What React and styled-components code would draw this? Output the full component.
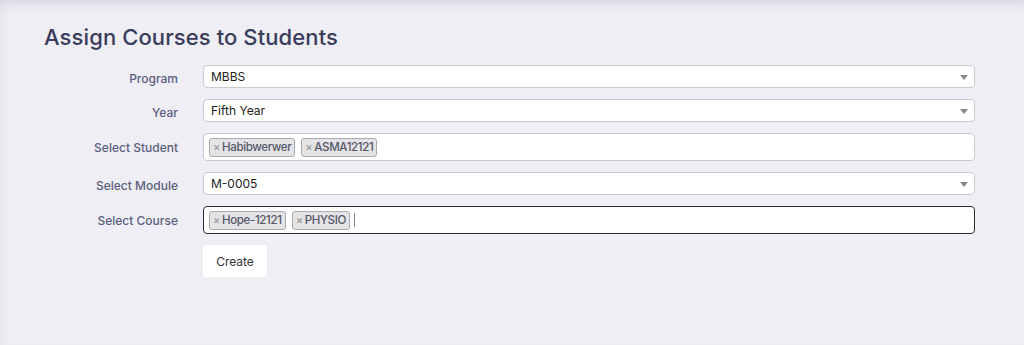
import React from 'react'
import styled, {createGlobalStyle} from 'styled-components'

const GlobalStyle = createGlobalStyle`
    html, body {
        margin: 0;
        padding: 0;
        background: #eeeef4;
        font-family: Inter, "Noto Sans", Arial, sans-serif;
    }
`

const Page = styled.div`
    height: 345px;
    box-sizing: border-box;
    background: #eeeef4;
    box-shadow: inset 0 12px 10px -8px rgba(200, 200, 215, 0.6), inset 10px 0 10px -8px rgba(225, 225, 235, 0.8);
    padding: 23px 49px 0 44px;

    h1 {
        margin: 0 0 14px;
        font-size: 22px;
        font-weight: 500;
        color: #393c5b;
        letter-spacing: 0.1px;
        line-height: 28px;
    }
`

const Form = styled.div`
    display: grid;
    grid-template-columns: 134px 1fr;
    column-gap: 25px;
    row-gap: 11px;
    align-items: center;
`

const Label = styled.label`
    text-align: right;
    font-size: 12px;
    font-weight: 500;
    color: #5b5e80;
    padding-top: ${props => props.low ? '4px' : '0'};
`

const Box = styled.div`
    position: relative;
    box-sizing: border-box;
    background: #fff;
    border: 1px solid ${props => props.focused ? '#2e2e33' : '#c9c9cf'};
    border-radius: 4px;
    height: ${props => props.tall ? '28px' : '23px'};
    display: flex;
    align-items: center;
    gap: 6px;
    padding: 0 ${props => props.tall ? '5px' : '7px'};
    font-size: 12px;
    color: #222;
`

const Arrow = styled.span`
    position: absolute;
    right: 6px;
    top: 9px;
    width: 0;
    height: 0;
    border-left: 4px solid transparent;
    border-right: 4px solid transparent;
    border-top: 5px solid #888;
`

const Tag = styled.span`
    display: inline-flex;
    align-items: center;
    height: 19px;
    box-sizing: border-box;
    padding: 0 3px;
    background: #e4e4e6;
    border: 1px solid #aaaab0;
    border-radius: 3px;
    font-size: 11.5px;
    font-weight: 500;
    letter-spacing: -0.35px;
    color: #55576a;

    span {
        color: #999;
        margin-right: 2px;
        font-size: 11px;
    }
`

const Caret = styled.i`
    display: inline-block;
    width: 1px;
    height: 14px;
    background: #888;
    margin-left: -2px;
`

const Button = styled.button`
    grid-column: 2;
    justify-self: start;
    width: 64px;
    height: 32px;
    border: none;
    border-radius: 2px;
    background: #fff;
    font-family: inherit;
    font-size: 12px;
    color: #333;
    cursor: pointer;
`

function Select({value}) {
    return (
        <Box>
            {value}
            <Arrow />
        </Box>
    )
}

function Tags({items, tall, focused, caret}) {
    return (
        <Box tall={tall} focused={focused}>
            {items.map(item => (
                <Tag key={item}><span>×</span>{item}</Tag>
            ))}
            {caret && <Caret />}
        </Box>
    )
}

export default function App() {
    return (
        <Page>
            <GlobalStyle />
            <h1>Assign Courses to Students</h1>
            <Form>
                <Label low>Program</Label>
                <Select value="MBBS" />
                <Label low>Year</Label>
                <Select value="Fifth Year" />
                <Label>Select Student</Label>
                <Tags tall items={['Habibwerwer', 'ASMA12121']} />
                <Label low>Select Module</Label>
                <Select value="M-0005" />
                <Label>Select Course</Label>
                <Tags tall focused caret items={['Hope-12121', 'PHYSIO']} />
                <Button>Create</Button>
            </Form>
        </Page>
    )
}
